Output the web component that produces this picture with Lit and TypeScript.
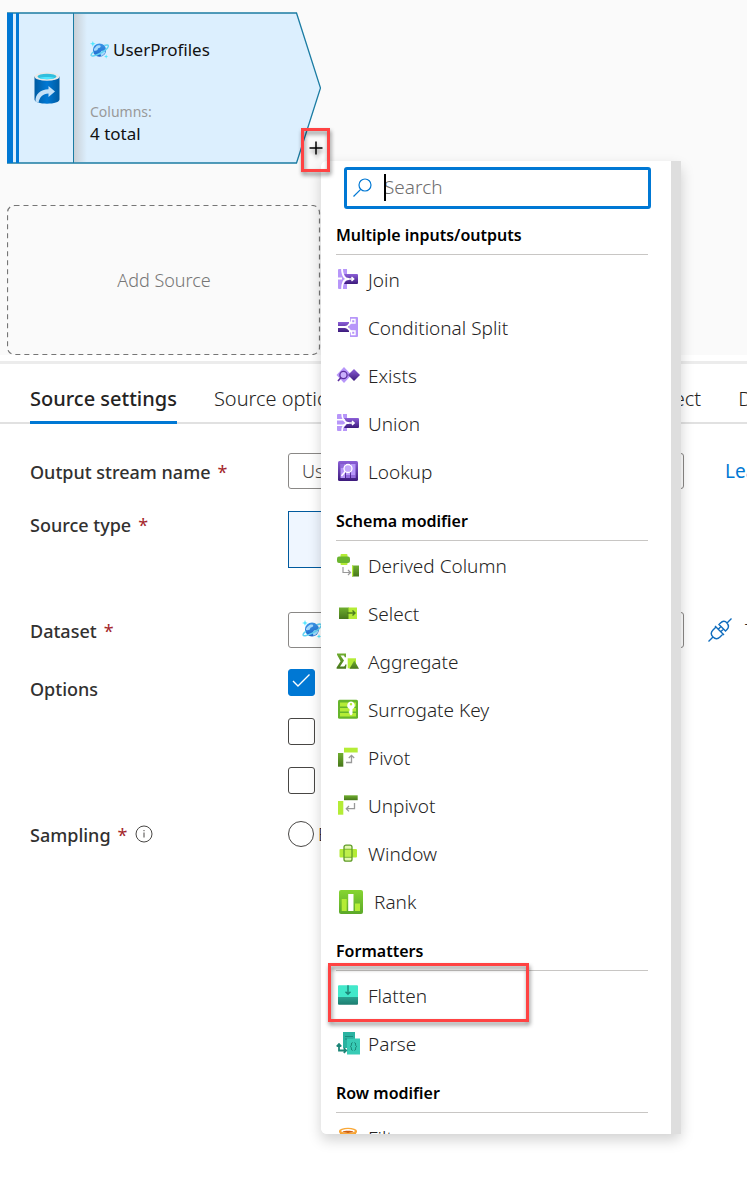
import { LitElement, html, svg, css } from "lit";
import { customElement } from "lit/decorators.js";

const icons: Record<string, unknown> = {
  join: svg`
    <path fill="#b796f9" d="M3 1h8v20H3a1 1 0 0 1-1-1V2a1 1 0 0 1 1-1z"/>
    <path fill="url(#violet)" d="M8 6h13a1 1 0 0 1 1 1v8a1 1 0 0 1-1 1H8l3-5z"/>
    <path fill="none" stroke="#fff" stroke-width="1.8" d="M6 0c0 6 1 11 7 11C7 11 6 16 6 22M2 10.500h4"/>
    <path fill="none" stroke="#fff" stroke-width="1.400" d="M11 11h6.500M15.500 9l2.200 2-2.200 2"/>`,
  split: svg`
    <path fill="#b796f9" d="M14 1h7a1 1 0 0 1 1 1v18a1 1 0 0 1-1 1h-7v-6l-2-4 2-4z"/>
    <path fill="url(#violet)" d="M2 6h11v10H2z"/>
    <path fill="none" stroke="#fff" stroke-width="1.800" d="M2 11h7c5 0 4-5.500 8-5.500M9 11c5 0 4 5.500 8 5.500"/>
    <path fill="#b796f9" stroke="#fff" stroke-width="1.400" d="M15.500 3.500h3.500v3.500h-3.500zM15.500 15h3.500v3.500h-3.500z"/>`,
  exists: svg`
    <path fill="#b796f9" d="M8 3l7.500 8L8 19l-7.500-8z"/>
    <path fill="url(#violet)" d="M18 5l6 6-6 6-6-6z"/>
    <circle cx="7.500" cy="11" r="3.600" fill="#c9b0fb" stroke="#5c2e9e" stroke-width="1.300"/>
    <path stroke="#5c2e9e" stroke-width="1.600" d="M5 13.500L2 17"/>`,
  union: svg`
    <path fill="#b796f9" d="M2 2h9v5H1V3a1 1 0 0 1 1-1zM1 8.500h9v4H1zM1 14h10v5H2a1 1 0 0 1-1-1z"/>
    <path fill="url(#violet)" d="M8 6h14a1 1 0 0 1 1 1v8a1 1 0 0 1-1 1H8l3-5z"/>
    <path fill="none" stroke="#fff" stroke-width="1.600" d="M6 1c0 5 2 10 7 10C8 11 6 15 6 20"/>
    <path fill="none" stroke="#fff" stroke-width="1.400" d="M10 11h8M16 9l2.200 2-2.200 2"/>`,
  lookup: svg`
    <rect x="2" y="1" width="20" height="20" rx="1.500" fill="url(#violet)"/>
    <path fill="#b796f9" d="M4.500 4h4.500v14H4.500zM10 4h4v14h-4zM15 4h4.500v14H15z"/>
    <path fill="#7b4fc9" d="M4.500 4h4v4h-4zM15 15h4.500v3H15zM10 15h4v3h-4z" opacity=".6"/>
    <circle cx="12" cy="8.500" r="4" fill="#c4a9fa" stroke="#fff" stroke-width="1.300"/>
    <path stroke="#fff" stroke-width="1.500" d="M9.200 11.500L5.500 16"/>`,
  derived: svg`
    <rect x="4.500" y="0" width="7" height="11" rx="1" fill="#b4ec36"/>
    <rect x="1" y="2.500" width="13" height="6.500" rx="2" fill="#6bb52f"/>
    <path fill="none" stroke="#999" stroke-width="1.200" d="M7 13v5.500h7.500M12 16l2.500 2.500L12 21"/>
    <rect x="16" y="11.500" width="7" height="11" fill="url(#leaf)"/>
    <path fill="#b4ec36" d="M16 11.500h1.200v11H16z"/>`,
  select: svg`
    <path fill="url(#leaf)" d="M3 5.500h10v11.500H3z"/>
    <path fill="#b4ec36" d="M12.500 5.500h8.500v11.500h-8.500z"/>
    <path fill="none" stroke="#4d7d1e" stroke-width="1.400" d="M11 11h8M16.500 8.500L19 11l-2.500 2.500"/>`,
  aggregate: svg`
    <path fill="url(#leaf)" d="M1 3.500h9v3.700H8.700c-.2-1.300-.6-1.700-1.700-1.700H4.500l3.500 5-4 6h3.300c1.200 0 1.700-.5 2-2h1.200l-.5 4.300H.6v-1.300l4-6.300L1 4.800z"/>
    <rect x="11.700" y="8.300" width="8.300" height="10" fill="#b4ec36"/>
    <path fill="url(#leaf)" d="M18.300 10.500l4.700 8.200h-9.500z"/>`,
  surrogate: svg`
    <rect x="2" y="1.800" width="20" height="19" rx="1.500" fill="#66b52b"/>
    <path fill="#b4ec36" d="M4 4.500h16v4H4zM4 10h16v3.500H4zM4 15h16v3.500H4z"/>
    <path fill="#fff" fill-rule="evenodd" d="M15 3.500a4 4 0 0 1 1.500 7.600V16L15 17.500 13.500 16v-1l-1-1 1-1v-1.900A4 4 0 0 1 15 3.500zm0 1.500a1.200 1.200 0 1 0 0 2.400A1.200 1.200 0 0 0 15 5z"/>`,
  pivot: svg`
    <path fill="url(#leaf)" d="M2 7h5.300v13.700H2z"/>
    <path fill="#b4ec36" d="M8 1.700h13.700v4.800H8z"/>
    <path fill="none" stroke="#999" stroke-width="1.300" d="M10 16.500h5.500V9.500M12.800 12l2.700-2.700 2.700 2.700"/>`,
  unpivot: svg`
    <path fill="url(#leaf)" d="M8 1.300h13.700v4.900H8z"/>
    <path fill="#b4ec36" d="M2 7h5.300v13.700H2z"/>
    <path fill="none" stroke="#999" stroke-width="1.300" d="M18.500 9v5.700H10.500M13 12l-2.700 2.700 2.700 2.700"/>`,
  window: svg`
    <rect x="3.500" y="7" width="17.500" height="8.500" rx="1" fill="#b4ec36"/>
    <rect x="8" y="3.200" width="8" height="16" rx="2" fill="#c8f25e" fill-opacity=".5" stroke="#5f9c28" stroke-width="1.300"/>
    <path stroke="#5f9c28" stroke-width=".7" d="M8 7.200h8M8 15.300h8"/>`,
  rank: svg`
    <rect width="24" height="24" rx="2" fill="url(#grass)"/>
    <path fill="#b4ec36" d="M2.700 9h5v12h-5zM16 13.500h5V21h-5z"/>
    <path fill="#fff" d="M9.200 4h5.300v17H9.200z"/>`,
  flatten: svg`
    <path fill="#42e8ca" d="M3 1.300h18a1 1 0 0 1 1 1V13H2V2.300a1 1 0 0 1 1-1z"/>
    <path fill="url(#teal)" d="M2 13h20v6.700a1 1 0 0 1-1 1H3a1 1 0 0 1-1-1z"/>
    <path fill="none" stroke="#1c8577" stroke-width="1.400" d="M12 1.300V10M9.500 7.700l2.500 2.600 2.500-2.600"/>`,
  parse: svg`
    <path fill="#2bb3a1" d="M7 0h12v16H7z"/>
    <path stroke="#1a8a7c" d="M9 4.500h8M9 7h8"/>
    <path fill="#38cbb5" d="M11 6.500h13v16H11z"/>
    <path fill="none" stroke="#178071" d="M16.500 10.500c-1.600 0-.5 3.300-2 4 1.500.7.400 4 2 4M18.500 10.500c1.600 0 .5 3.300 2 4-1.500.7-.4 4-2 4"/>
    <path fill="none" stroke="#1c8577" stroke-width="1.800" d="M3 12.500v6h7M.7 14.500L3 12l2.300 2.500M7.800 16.200l2.400 2.300-2.400 2.300"/>`,
  filter: svg`
    <path fill="#f4a030" d="M3 5c0 4 6 6 6.500 9v8h5v-8C15 11 21 9 21 5z"/>
    <ellipse cx="12" cy="5" rx="9" ry="3.300" fill="#f9a838"/>
    <ellipse cx="12" cy="5" rx="6.800" ry="1.900" fill="#fff"/>
    <path fill="#d15f0c" d="M6.500 5.800c2-1.300 9-1.300 11 0-2 1.500-9 1.500-11 0z"/>`,
};

const planet = svg`
  <circle cx="10" cy="9.500" r="7" fill="url(#globe)"/>
  <path fill="#a5dafc" d="M6 6.200c2-2.200 5.500-2 5.200-.2-.3 1.500-3 1-3 2.500 0 1.500-2.400 2.100-4.200 1.400C3.700 8.700 4.700 7.300 6 6.200zM12 10.500c1.500-.7 3.500.2 4.300 1-.6 1.900-2.600 3.600-4.500 4.200-1.200-1-1-4.500.2-5.200z"/>
  <path fill="none" stroke="#62d3f2" stroke-width="1.600" d="M15 4.800c3-1.200 4.700-.6 4.200 1-.9 2.400-5 5.500-9.300 7.600-4 1.900-8.200 3-8.700 1.700-.3-.9 1-2.600 2.600-3.800"/>
  <path fill="#50e6ff" d="M3 0l.8 2.200L6 3l-2.200.8L3 6l-.8-2.200L0 3l2.200-.8zM17 14l.6 1.700 1.700.6-1.700.6L17 18.600l-.6-1.700-1.700-.6 1.700-.6z"/>`;

const groups = [
  { title: "Multiple inputs/outputs", items: [["join", "Join"], ["split", "Conditional Split"], ["exists", "Exists"], ["union", "Union"], ["lookup", "Lookup"]] },
  { title: "Schema modifier", items: [["derived", "Derived Column"], ["select", "Select"], ["aggregate", "Aggregate"], ["surrogate", "Surrogate Key"], ["pivot", "Pivot"], ["unpivot", "Unpivot"], ["window", "Window"], ["rank", "Rank"]] },
  { title: "Formatters", items: [["flatten", "Flatten"], ["parse", "Parse"]] },
  { title: "Row modifier", items: [["filter", "Filter"]] },
];

const tabs = ["Source settings", "Source options", "Projection", "Optimize", "Inspect", "Data preview"];

@customElement("app-root")
export class AppRoot extends LitElement {
  static styles = css`
    :host {
      display: block;
      position: relative;
      min-height: 100vh;
      overflow: hidden;
      background: #fff;
      color: #252423;
      font: 350 19px/24px "Noto Sans", "Open Sans", sans-serif;
    }
    * { box-sizing: border-box; }
    button, input { font: inherit; color: inherit; }
    button { border: 0; padding: 0; background: none; text-align: left; }
    svg { display: block; flex: none; }
    .defs { position: absolute; width: 0; height: 0; }

    .canvas {
      display: flex;
      flex-direction: column;
      align-items: flex-start;
      gap: 41px;
      padding: 12px 7px 0;
      background: #fafafa;
    }
    .node { position: relative; width: 314px; height: 152px; display: flex; color: #111; }
    .shape { position: absolute; inset: 0; }
    .kind { position: relative; width: 67px; padding-left: 12px; display: grid; place-items: center; }
    .body { position: relative; flex: 1; padding: 26px 16px 0; font-size: 17px; font-weight: 450; }
    .name { display: flex; align-items: center; gap: 4px; margin-bottom: 39px; }
    .caption { color: #999; font-size: 14px; font-weight: 400; line-height: 22px; }
    .value { line-height: 22px; }
    .plus {
      position: absolute;
      z-index: 3;
      left: 294px;
      top: 116px;
      width: 29px;
      height: 44px;
      border: 3px solid #ff4343;
      filter: drop-shadow(1px 3px 2px #0007);
      display: flex;
      justify-content: center;
      padding-top: 10px;
    }
    .add {
      position: relative;
      width: 314px;
      height: 150px;
      color: #767676;
      font-size: 18px;
      text-align: center;
    }
    .dash { position: absolute; inset: 0; }
    .splitter { height: 9px; border-bottom: 3px solid #ececec; }

    .tabs { display: flex; gap: 37px; padding: 0 30px; border-bottom: 2px solid #e1e1e1; white-space: nowrap; font-size: 20px; }
    .tab { height: 60px; padding-top: 12px; border-bottom: 3px solid transparent; margin-bottom: -2px; flex: none; display: flex; align-items: center; padding-bottom: 0; }
    .tab.on { font-weight: 475; border-color: #0078d4; }

    .form { padding: 29px 0 0 30px; white-space: nowrap; font-size: 18px; }
    .row { display: flex; align-items: flex-start; margin-bottom: 22px; }
    .label { width: 258px; flex: none; padding-top: 7px; color: #323130; font-weight: 475; display: flex; gap: 7px; }
    .star { color: #a4262c; font-weight: 400; }
    .info { margin-top: 2px; }
    .type .label { padding-top: 2px; }
    .field { width: 396px; height: 36px; flex: none; border: 1px solid #8a8886; border-radius: 3px; padding: 0 13px; background: #fff; color: #484644; display: flex; align-items: center; gap: 6px; }
    .field input { border: 0; outline: 0; padding: 0; flex: 1; min-width: 0; background: none; }
    .learn { margin-left: 41px; padding-top: 6px; color: #0078d4; text-decoration: none; font-size: 19px; font-weight: 400; }
    .kinds { width: 120px; height: 57px; border: 1px solid #005a9e; background: #eff6ff; text-align: center; }
    .type { margin-bottom: 44px; }
    .test { margin-left: 24px; height: 36px; display: flex; align-items: center; gap: 13px; }
    .data { margin-bottom: 21px; }
    .opts { display: grid; gap: 22px; }
    .opt { display: flex; align-items: center; gap: 4px; height: 27px; }
    .options .label { padding-top: 8px; }
    .options { margin-bottom: 26px; }
    .box { appearance: none; margin: 0; width: 27px; height: 27px; border: 1px solid #484644; border-radius: 3px; background: #fff; }
    .box:checked {
      border-color: #0078d4;
      background: #0078d4 url("data:image/svg+xml,%3Csvg xmlns='http://www.w3.org/2000/svg' viewBox='0 0 25 25'%3E%3Cpath d='M4 11l5 5L20.500 4.500' fill='none' stroke='%23fff' stroke-width='1.400'/%3E%3C/svg%3E") center / 25px;
    }
    .radio { appearance: none; margin: 0; width: 26px; height: 26px; border: 1px solid #484644; border-radius: 50%; background: #fff; }
    .sampling .label { padding-top: 3px; }

    .menu {
      position: absolute;
      z-index: 2;
      left: 321px;
      top: 161px;
      width: 360px;
      height: 973px;
      overflow: hidden;
      border-radius: 6px 0 0 6px;
      border-right: 10px solid #dedede;
      background: #fff;
    }
    .shadow { position: absolute; z-index: 1; left: 321px; top: 161px; width: 360px; height: 973px; border-radius: 6px; box-shadow: 0 6px 14px #0000002e; }
    .search { display: flex; align-items: center; gap: 12px; height: 42px; margin: 6px 20px 1px 23px; padding: 0 6px 2px; border: 3px solid #0078d4; border-radius: 3px; }
    .search input { border: 0; outline: 0; padding: 0; min-width: 0; flex: 1; line-height: 24px; }
    .search input::placeholder { color: #6e6e6e; opacity: 1; }
    .caret { width: 2px; height: 27px; background: #000; margin-right: -14px; z-index: 1; }
    .list { padding: 0 23px 0 15px; }
    .head { margin: 0 0 1px; height: 45px; padding-top: 13px; border-bottom: 1px solid #c8c6c4; color: #000; font-size: 16px; line-height: 24px; font-weight: 600; }
    .item { position: relative; display: flex; align-items: center; gap: 8px; width: 100%; height: 48px; }
    .big { margin: 0 3px; }
    .mark { position: absolute; left: -8px; top: -9px; width: 201px; height: 59px; border: 3px solid #ff4343; filter: drop-shadow(1px 3px 2px #0007); }
  `;

  private label(text: string, required = true, target = "") {
    return html`<label class="label" for=${target}>${text}${required ? html`<span class="star">*</span>` : ""}${text === "Sampling"
      ? html`<svg class="info" width="18" height="18" viewBox="0 0 18 18" fill="none" stroke="#484644"><circle cx="9" cy="9" r="8"/><path d="M9 7.500v5M9 5v1.200"/></svg>` : ""}</label>`;
  }

  render() {
    return html`
      <svg class="defs" aria-hidden="true"><defs>
        <linearGradient id="violet" x2="0" y2="1"><stop stop-color="#8c5fd8"/><stop offset="1" stop-color="#3c1a7c"/></linearGradient>
        <linearGradient id="leaf" x2="0" y2="1"><stop stop-color="#6fae2f"/><stop offset="1" stop-color="#47761b"/></linearGradient>
        <linearGradient id="grass" x2="0" y2="1"><stop stop-color="#86d532"/><stop offset="1" stop-color="#5ba829"/></linearGradient>
        <linearGradient id="teal" x2="0" y2="1"><stop stop-color="#2ba190"/><stop offset="1" stop-color="#1c7d70"/></linearGradient>
        <linearGradient id="globe" x2="0" y2="1"><stop stop-color="#3b96e8"/><stop offset="1" stop-color="#1f68cc"/></linearGradient>
        <linearGradient id="drum"><stop stop-color="#005ba1"/><stop offset=".5" stop-color="#0078d4"/><stop offset="1" stop-color="#005ba1"/></linearGradient>
        <linearGradient id="fold"><stop stop-color="#c9d0d6"/><stop offset="1" stop-color="#dceffe"/></linearGradient>
      </defs></svg>

      <section class="canvas">
        <div class="node">
          <svg class="shape" width="314" height="152" viewBox="0 0 314 152">
            <path fill="#dceffe" stroke="#1b7ca3" stroke-width="1.300" d="M.5 1h289l24 75-24 75H.5z"/>
            <path fill="url(#fold)" d="M67 2h13v148H67z"/>
            <path fill="#0078d4" d="M0 1h6v150H0zM9 1h3v150H9z"/>
            <path stroke="#1b7ca3" d="M66.500 1v150"/>
          </svg>
          <div class="kind">
            <svg width="26" height="32" viewBox="0 0 26 32">
              <path fill="url(#drum)" d="M.5 4.500h25v23c0 2.400-5.600 4.200-12.500 4.200S.5 29.900.5 27.500z"/>
              <ellipse cx="13" cy="4.500" rx="12.500" ry="4.300" fill="#e8e8e8"/>
              <ellipse cx="13" cy="4.500" rx="9.500" ry="2.800" fill="#32bedd"/>
              <path fill="#50e6ff" d="M5.500 6c3-1.300 12-1.300 15 0-3 1.500-12 1.500-15 0z"/>
              <path fill="#c3e0f7" d="M1.500 29.500c-.5-7 5-12 13-12.200v-3.300l6.500 5.500-6.500 5.500v-3.600c-5.500.2-9 3.500-10 9.300z"/>
            </svg>
          </div>
          <div class="body">
            <div class="name"><svg width="19" height="19" viewBox="0 0 20 20">${planet}</svg>UserProfiles</div>
            <div class="caption">Columns:</div>
            <div class="value">4 total</div>
          </div>
          <button class="plus" aria-label="Add transformation">
            <svg width="14" height="14" viewBox="0 0 14 14"><path stroke="#000" stroke-width="1.500" d="M7 .5v13M.5 7h13"/></svg>
          </button>
        </div>
        <button class="add">
          <svg class="dash" width="314" height="150" viewBox="0 0 314 150"><rect x=".5" y=".5" width="312" height="149" rx="7" fill="none" stroke="#767676" stroke-width="1.200" stroke-dasharray="5 4"/></svg>
          Add Source
        </button>
      </section>
      <div class="splitter"></div>

      <nav class="tabs">${tabs.map((t, i) => html`<button class="tab ${i === 0 ? "on" : ""}">${t}</button>`)}</nav>

      <form class="form">
        <div class="row">
          ${this.label("Output stream name", true, "stream")}
          <div class="field"><input id="stream" value="UserProfiles"></div>
          <a class="learn" href="#">Learn more</a>
        </div>
        <div class="row type">
          ${this.label("Source type", true, "kind")}
          <button class="kinds" id="kind" type="button"></button>
        </div>
        <div class="row data">
          ${this.label("Dataset", true, "dataset")}
          <div class="field"><svg width="20" height="20" viewBox="0 0 20 20">${planet}</svg><input id="dataset"></div>
          <button class="test" type="button">
            <svg width="24" height="24" viewBox="0 0 24 24" fill="none" stroke="#0f6cbd" stroke-width="1.400"><path d="M.5 23.500l4.500-4.500M19 5l4.500-4.500M5 19c-2.500-2.500-2-5 0-7l3-3 7 7-3 3c-2 2-4.500 2.500-7 0zM11 6.500l1.500-1.500c2-2 4.500-2.500 6.500 0s2 4.500 0 6.500L17.500 13zM8 9l-1-1M15 16l1 1M10 11.500l3-3M12.500 14l3-3"/></svg>
            Test connection
          </button>
        </div>
        <div class="row options">
          ${this.label("Options", false, "drift")}
          <div class="opts">
            <div class="opt"><input class="box" id="drift" type="checkbox" checked></div>
            <div class="opt"><input class="box" type="checkbox" aria-label="Infer drifted column types"></div>
            <div class="opt"><input class="box" type="checkbox" aria-label="Validate schema"></div>
          </div>
        </div>
        <div class="row sampling">
          ${this.label("Sampling", true, "enable")}
          <div class="opt"><input class="radio" id="enable" type="radio"><label for="enable">Enable</label></div>
        </div>
      </form>

      <div class="shadow"></div>
      <div class="menu">
        <div class="search">
          <svg width="19" height="19" viewBox="0 0 19 19" fill="none" stroke="#0078d4" stroke-width="1.200"><circle cx="12" cy="7" r="6"/><path d="M7.700 11.300L.5 18.500"/></svg>
          <span class="caret"></span>
          <input type="text" placeholder="Search" aria-label="Search">
        </div>
        <div class="list">
          ${groups.map((g) => html`
            <h3 class="head">${g.title}</h3>
            ${g.items.map(([icon, name]) => html`
              <button class="item">
                <svg class=${icon === "rank" ? "big" : ""} width="24" height="24" viewBox="0 0 24 24">${icons[icon]}</svg>${name}
                ${icon === "flatten" ? html`<span class="mark"></span>` : ""}
              </button>`)}`)}
        </div>
      </div>
    `;
  }
}
